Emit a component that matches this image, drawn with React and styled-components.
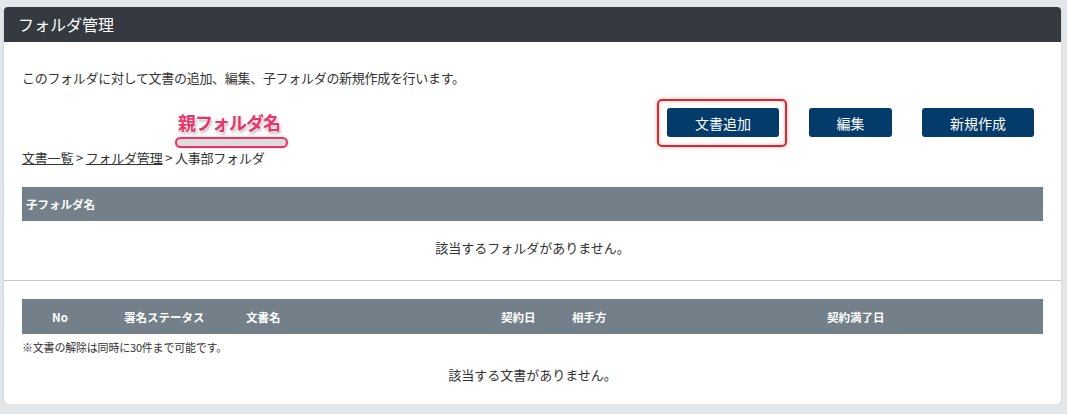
import React from 'react'
import styled, { createGlobalStyle } from 'styled-components'

const GlobalStyle = createGlobalStyle`
    body {
        margin: 0;
        background: #e4e7ea;
        font-family: "Noto Sans CJK JP", "Noto Sans", "Liberation Sans", sans-serif;
        color: #333;
    }
`

const buttons = ['文書追加', '編集', '新規作成']

const docColumns = [
    { label: 'No', width: 76, center: true },
    { label: '署名ステータス', width: 122 },
    { label: '文書名', width: 255 },
    { label: '契約日', width: 71 },
    { label: '相手方', width: 255 },
    { label: '契約満了日', width: 242 },
]

const App = () => {
    return (
        <>
            <GlobalStyle />
            <Card>
                <CardHeader>フォルダ管理</CardHeader>
                <Section>
                    <Description>このフォルダに対して文書の追加、編集、子フォルダの新規作成を行います。</Description>
                    <ButtonRow>
                        {buttons.map((label) => (
                            <ActionButton key={label} $wide={label.length > 2}>{label}</ActionButton>
                        ))}
                    </ButtonRow>
                    <Breadcrumb>
                        <Crumb>文書一覧</Crumb> &gt; <Crumb>フォルダ管理</Crumb> &gt; 人事部フォルダ
                    </Breadcrumb>
                    <TableHead>
                        <HeadCell $padding={4}>子フォルダ名</HeadCell>
                    </TableHead>
                    <Empty $top={17}>該当するフォルダがありません。</Empty>
                </Section>
                <Divider />
                <Section $bottom={19}>
                    <TableHead $tall>
                        {docColumns.map((col) => (
                            <HeadCell key={col.label} $width={col.width} $center={col.center} $padding={col.center ? 0 : 26}>
                                {col.label}
                            </HeadCell>
                        ))}
                    </TableHead>
                    <Note>※文書の解除は同時に30件まで可能です。</Note>
                    <Empty $top={10}>該当する文書がありません。</Empty>
                </Section>

                <Callout>親フォルダ名</Callout>
                <CalloutPill />
                <Highlight />
            </Card>
        </>
    )
}

const Card = styled.div`
    position: relative;
    width: 1057px;
    margin: 7px 0 0 4px;
    background: #fff;
    border-radius: 4px;
    box-shadow: 0 1px 2px rgba(0, 0, 0, 0.2);
`

const CardHeader = styled.div`
    height: 35px;
    line-height: 35px;
    padding-left: 14px;
    background: #343a40;
    color: #fff;
    font-size: 16px;
    border-radius: 4px 4px 0 0;
`

const Section = styled.div`
    padding: 0 18px ${(p) => p.$bottom || 0}px;
`

const Description = styled.div`
    margin-top: 26px;
    font-size: 13px;
    line-height: 20px;
    letter-spacing: -0.3px;
`

const ButtonRow = styled.div`
    display: flex;
    justify-content: flex-end;
    gap: 30px;
    margin-top: 20px;
    padding-right: 9px;
`

const ActionButton = styled.button`
    width: ${(p) => (p.$wide ? 112 : 83)}px;
    height: 29px;
    background: #033b6b;
    color: #fff;
    border: none;
    border-radius: 3px;
    font-family: inherit;
    font-size: 14px;
    padding: 0;
`

const Breadcrumb = styled.div`
    margin-top: 11px;
    font-size: 13px;
    line-height: 20px;
    letter-spacing: -0.2px;
    color: #333;
`

const Crumb = styled.span`
    text-decoration: underline;
`

const TableHead = styled.div`
    display: flex;
    align-items: center;
    height: ${(p) => (p.$tall ? 35 : 34)}px;
    margin-top: ${(p) => (p.$tall ? 18 : 19)}px;
    background: #748089;
    color: #fff;
    font-size: 11.5px;
    font-weight: bold;
`

const HeadCell = styled.div`
    width: ${(p) => (p.$width ? `${p.$width}px` : 'auto')};
    flex: ${(p) => (p.$width ? 'none' : '1')};
    padding-left: ${(p) => p.$padding}px;
    text-align: ${(p) => (p.$center ? 'center' : 'left')};
    box-sizing: border-box;
`

const Empty = styled.div`
    margin-top: ${(p) => p.$top}px;
    text-align: center;
    font-size: 13px;
    line-height: 20px;
`

const Divider = styled.div`
    height: 1px;
    margin-top: 22px;
    background: #c4c8cc;
`

const Note = styled.div`
    margin-top: 5px;
    font-size: 11px;
    line-height: 16px;
    letter-spacing: -0.2px;
`

const Callout = styled.div`
    position: absolute;
    left: 174px;
    top: 104px;
    color: #e8336b;
    font-size: 18px;
    font-weight: bold;
    line-height: 22px;
    letter-spacing: -1px;
    text-shadow: 0 0 2px #fff, 0 0 2px #fff, 1px 2px 3px rgba(0, 0, 0, 0.35);
`

const CalloutPill = styled.div`
    position: absolute;
    left: 171px;
    top: 130px;
    width: 113px;
    height: 11px;
    box-sizing: border-box;
    background: #dcdcdc;
    border: 2px solid #e8336b;
    border-radius: 6px;
    box-shadow: 0 0 3px rgba(0, 0, 0, 0.2);
`

const Highlight = styled.div`
    position: absolute;
    left: 653px;
    top: 92px;
    width: 130px;
    height: 48px;
    box-sizing: border-box;
    border: 2px solid #e42228;
    border-radius: 5px;
    box-shadow: 0 0 4px rgba(0, 0, 0, 0.25), inset 0 0 4px rgba(0, 0, 0, 0.2);
`

export default App
